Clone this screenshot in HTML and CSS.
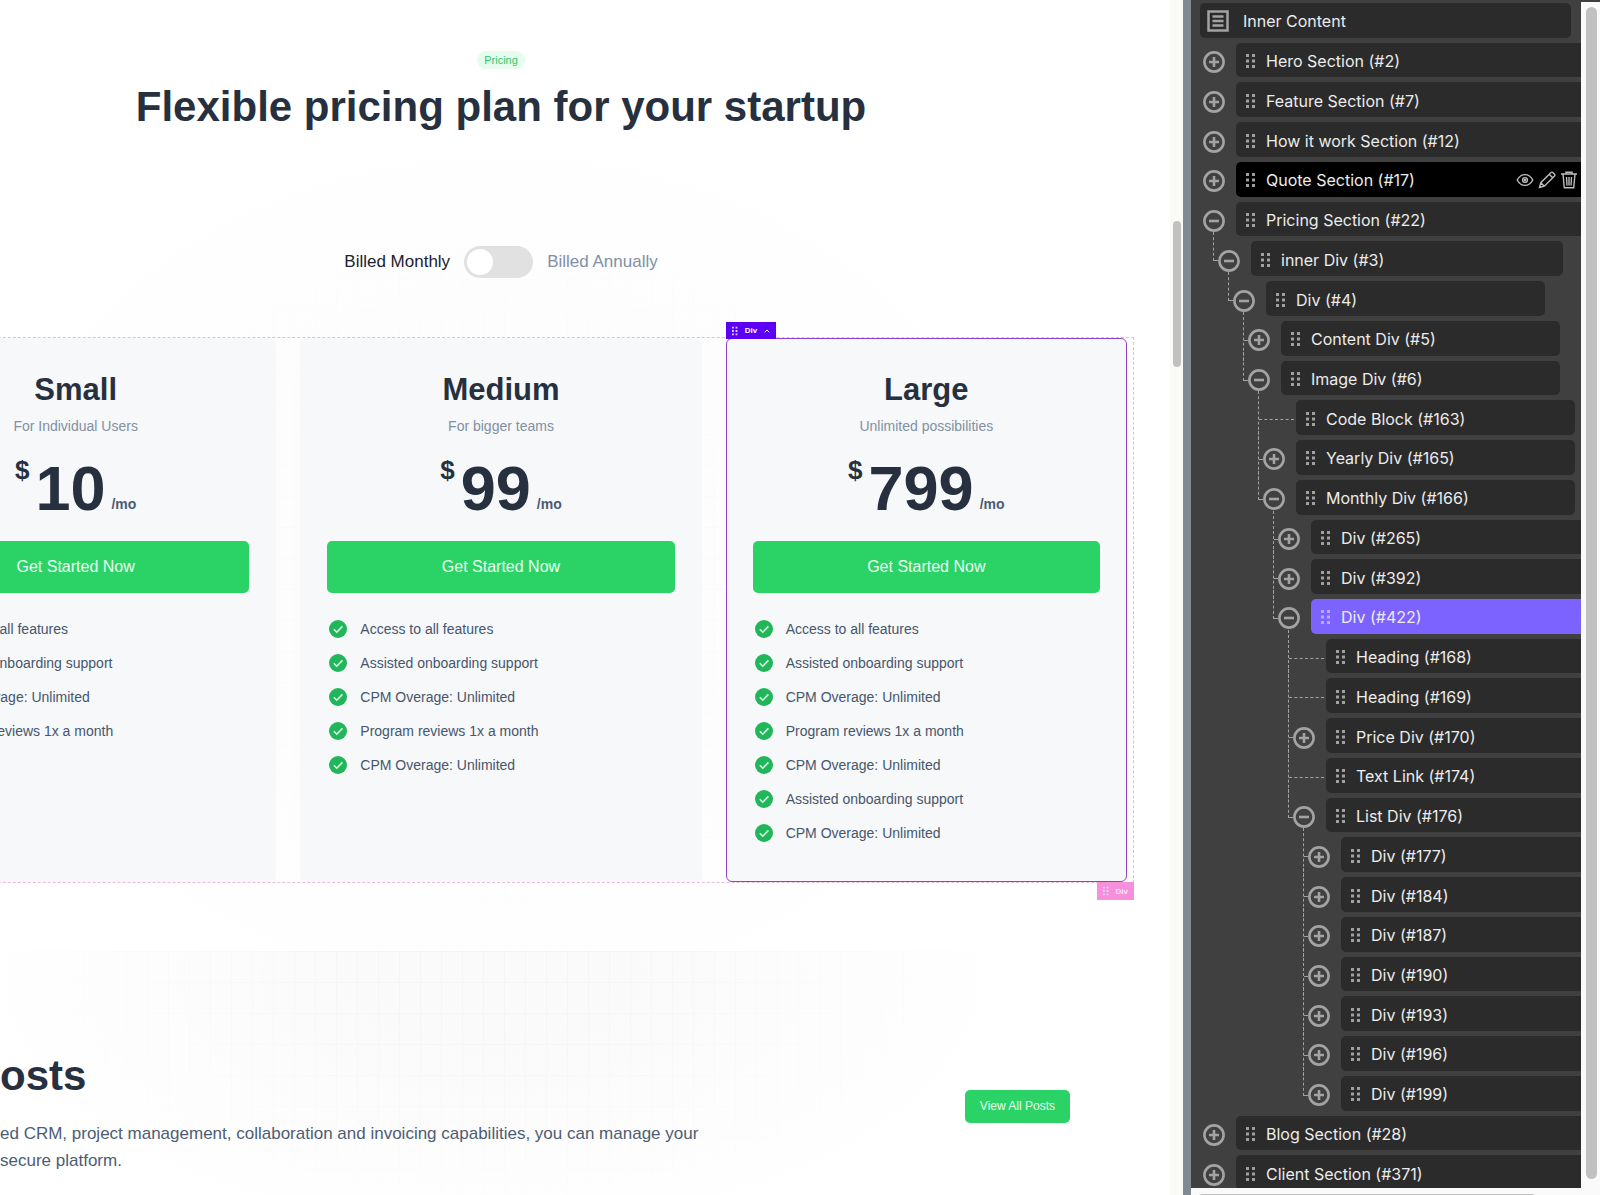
FILE: index.html
```html
<!DOCTYPE html>
<html lang="en">
<head>
  <meta charset="UTF-8">
  <meta name="viewport" content="width=device-width, initial-scale=1.0">
  <title>Page Builder</title>
  <link rel="stylesheet" href="styles.css">
</head>
<body>

  <!-- Shared icons -->
  <svg class="sprite" aria-hidden="true">
    <symbol id="plus" viewBox="0 0 22 22"><circle cx="11" cy="11" r="9.6"/><path d="M11 6v10M6 11h10"/></symbol>
    <symbol id="minus" viewBox="0 0 22 22"><circle cx="11" cy="11" r="9.6"/><path d="M6 11h10"/></symbol>
    <symbol id="dots" viewBox="0 0 10 16"><path d="M0 1h3v3H0zM6 1h3v3H6zM0 6.5h3v3H0zM6 6.5h3v3H6zM0 12h3v3H0zM6 12h3v3H6z"/></symbol>
    <symbol id="check" viewBox="0 0 18 18"><circle cx="9" cy="9" r="9" fill="#22b65b"/><path d="M4.8 9.2l3 3 5.6-5.8" fill="none" stroke="#d9fbe5" stroke-width="1.6"/></symbol>
  </svg>

  <main class="canvas">
    <section class="pricing">
      <div class="pricing-inner">
        <span class="badge">Pricing</span>
        <h1>Flexible pricing plan for your startup</h1>

        <div class="billing">
          <label for="billing">Billed Monthly</label>
          <input type="checkbox" id="billing" class="switch">
          <label for="billing" class="muted">Billed Annually</label>
        </div>

        <div class="plans">
          <article class="plan">
            <h2>Small</h2>
            <p class="plan-sub">For Individual Users</p>
            <div class="price"><span class="currency">$</span><span class="amount">10</span><span class="period">/mo</span></div>
            <a href="#" class="btn">Get Started Now</a>
            <ul class="features">
              <li><svg><use href="#check"/></svg>Access to all features</li>
              <li><svg><use href="#check"/></svg>Assisted onboarding support</li>
              <li><svg><use href="#check"/></svg>CPM Overage: Unlimited</li>
              <li><svg><use href="#check"/></svg>Program reviews 1x a month</li>
            </ul>
          </article>

          <article class="plan">
            <h2>Medium</h2>
            <p class="plan-sub">For bigger teams</p>
            <div class="price"><span class="currency">$</span><span class="amount">99</span><span class="period">/mo</span></div>
            <a href="#" class="btn">Get Started Now</a>
            <ul class="features">
              <li><svg><use href="#check"/></svg>Access to all features</li>
              <li><svg><use href="#check"/></svg>Assisted onboarding support</li>
              <li><svg><use href="#check"/></svg>CPM Overage: Unlimited</li>
              <li><svg><use href="#check"/></svg>Program reviews 1x a month</li>
              <li><svg><use href="#check"/></svg>CPM Overage: Unlimited</li>
            </ul>
          </article>

          <article class="plan selected">
            <button class="tag"><svg class="tag-dots"><use href="#dots"/></svg>Div<svg class="tag-caret" viewBox="0 0 6 4"><path d="M.7 3.3L3 1l2.300 2.300"/></svg></button>
            <h2>Large</h2>
            <p class="plan-sub">Unlimited possibilities</p>
            <div class="price"><span class="currency">$</span><span class="amount">799</span><span class="period">/mo</span></div>
            <a href="#" class="btn">Get Started Now</a>
            <ul class="features">
              <li><svg><use href="#check"/></svg>Access to all features</li>
              <li><svg><use href="#check"/></svg>Assisted onboarding support</li>
              <li><svg><use href="#check"/></svg>CPM Overage: Unlimited</li>
              <li><svg><use href="#check"/></svg>Program reviews 1x a month</li>
              <li><svg><use href="#check"/></svg>CPM Overage: Unlimited</li>
              <li><svg><use href="#check"/></svg>Assisted onboarding support</li>
              <li><svg><use href="#check"/></svg>CPM Overage: Unlimited</li>
            </ul>
          </article>

          <button class="tag tag-parent"><svg class="tag-dots"><use href="#dots"/></svg>Div</button>
        </div>
      </div>
    </section>

    <section class="blog">
      <div>
        <h1>osts</h1>
        <p>ed CRM, project management, collaboration and invoicing capabilities, you can manage your<br>secure platform.</p>
      </div>
      <a href="#" class="btn btn-small">View All Posts</a>
    </section>
  </main>

  <div class="canvas-scroll"><div class="thumb"></div></div>
  <div class="divider"></div>

  <aside class="structure">
    <div class="tree-panel">
      <ul class="tree">
        <li class="root"><div class="node"><svg class="root-icon" viewBox="0 0 22 22"><path d="M1.500 1.500h19v19h-19z"/><path d="M5.500 6.500h11M5.500 11h11M5.500 15.500h11"/></svg>Inner Content</div></li>
        <li class="l0"><button class="toggle" aria-label="Expand"><svg><use href="#plus"/></svg></button><div class="node"><svg class="dots"><use href="#dots"/></svg>Hero Section (#2)</div></li>
        <li class="l0"><button class="toggle" aria-label="Expand"><svg><use href="#plus"/></svg></button><div class="node"><svg class="dots"><use href="#dots"/></svg>Feature Section (#7)</div></li>
        <li class="l0"><button class="toggle" aria-label="Expand"><svg><use href="#plus"/></svg></button><div class="node"><svg class="dots"><use href="#dots"/></svg>How it work Section (#12)</div></li>
        <li class="l0"><button class="toggle" aria-label="Expand"><svg><use href="#plus"/></svg></button>
          <div class="node hovered"><svg class="dots"><use href="#dots"/></svg>Quote Section (#17)
            <span class="actions">
              <button aria-label="Hide"><svg viewBox="0 0 18 18"><path d="M1.200 9C3 5.600 5.800 3.600 9 3.600s6 2 7.800 5.400c-1.800 3.400-4.600 5.400-7.800 5.400S3 12.400 1.200 9z"/><circle cx="9" cy="9" r="2.400"/><circle cx="9" cy="9" r=".6"/></svg></button>
              <button aria-label="Edit"><svg viewBox="0 0 18 18"><path d="M1.500 16.500l1.300-4.800L13 1.500q1-.8 2 .2l1.300 1.300q1 1 .2 2L6.300 15.200zM11.200 3.300l3.500 3.500M2.800 11.700l3.500 3.500"/></svg></button>
              <button aria-label="Delete"><svg viewBox="0 0 18 18"><path d="M1 3h16M6 3V1.200h6V3M3 3l1.300 13.800h9.400L15 3M6.500 6l.5 8.500M9 6v8.500M11.500 6l-.5 8.500"/></svg></button>
            </span>
          </div></li>
        <li class="l0"><button class="toggle" aria-label="Collapse"><svg><use href="#minus"/></svg></button><div class="node"><svg class="dots"><use href="#dots"/></svg>Pricing Section (#22)</div></li>
        <li class="l1 last"><button class="toggle" aria-label="Collapse"><svg><use href="#minus"/></svg></button><div class="node"><svg class="dots"><use href="#dots"/></svg>inner Div (#3)</div></li>
        <li class="l2 last"><button class="toggle" aria-label="Collapse"><svg><use href="#minus"/></svg></button><div class="node"><svg class="dots"><use href="#dots"/></svg>Div (#4)</div></li>
        <li class="l3"><button class="toggle" aria-label="Expand"><svg><use href="#plus"/></svg></button><div class="node"><svg class="dots"><use href="#dots"/></svg>Content Div (#5)</div></li>
        <li class="l3 last"><button class="toggle" aria-label="Collapse"><svg><use href="#minus"/></svg></button><div class="node"><svg class="dots"><use href="#dots"/></svg>Image Div (#6)</div></li>
        <li class="l4 leaf"><div class="node"><svg class="dots"><use href="#dots"/></svg>Code Block (#163)</div></li>
        <li class="l4"><button class="toggle" aria-label="Expand"><svg><use href="#plus"/></svg></button><div class="node"><svg class="dots"><use href="#dots"/></svg>Yearly Div (#165)</div></li>
        <li class="l4 last"><button class="toggle" aria-label="Collapse"><svg><use href="#minus"/></svg></button><div class="node"><svg class="dots"><use href="#dots"/></svg>Monthly Div (#166)</div></li>
        <li class="l5"><button class="toggle" aria-label="Expand"><svg><use href="#plus"/></svg></button><div class="node"><svg class="dots"><use href="#dots"/></svg>Div (#265)</div></li>
        <li class="l5"><button class="toggle" aria-label="Expand"><svg><use href="#plus"/></svg></button><div class="node"><svg class="dots"><use href="#dots"/></svg>Div (#392)</div></li>
        <li class="l5 last"><button class="toggle" aria-label="Collapse"><svg><use href="#minus"/></svg></button><div class="node active"><svg class="dots"><use href="#dots"/></svg>Div (#422)</div></li>
        <li class="l6 leaf"><div class="node"><svg class="dots"><use href="#dots"/></svg>Heading (#168)</div></li>
        <li class="l6 leaf"><div class="node"><svg class="dots"><use href="#dots"/></svg>Heading (#169)</div></li>
        <li class="l6"><button class="toggle" aria-label="Expand"><svg><use href="#plus"/></svg></button><div class="node"><svg class="dots"><use href="#dots"/></svg>Price Div (#170)</div></li>
        <li class="l6 leaf"><div class="node"><svg class="dots"><use href="#dots"/></svg>Text Link (#174)</div></li>
        <li class="l6 last"><button class="toggle" aria-label="Collapse"><svg><use href="#minus"/></svg></button><div class="node"><svg class="dots"><use href="#dots"/></svg>List Div (#176)</div></li>
        <li class="l7"><button class="toggle" aria-label="Expand"><svg><use href="#plus"/></svg></button><div class="node"><svg class="dots"><use href="#dots"/></svg>Div (#177)</div></li>
        <li class="l7"><button class="toggle" aria-label="Expand"><svg><use href="#plus"/></svg></button><div class="node"><svg class="dots"><use href="#dots"/></svg>Div (#184)</div></li>
        <li class="l7"><button class="toggle" aria-label="Expand"><svg><use href="#plus"/></svg></button><div class="node"><svg class="dots"><use href="#dots"/></svg>Div (#187)</div></li>
        <li class="l7"><button class="toggle" aria-label="Expand"><svg><use href="#plus"/></svg></button><div class="node"><svg class="dots"><use href="#dots"/></svg>Div (#190)</div></li>
        <li class="l7"><button class="toggle" aria-label="Expand"><svg><use href="#plus"/></svg></button><div class="node"><svg class="dots"><use href="#dots"/></svg>Div (#193)</div></li>
        <li class="l7"><button class="toggle" aria-label="Expand"><svg><use href="#plus"/></svg></button><div class="node"><svg class="dots"><use href="#dots"/></svg>Div (#196)</div></li>
        <li class="l7 last"><button class="toggle" aria-label="Expand"><svg><use href="#plus"/></svg></button><div class="node"><svg class="dots"><use href="#dots"/></svg>Div (#199)</div></li>
        <li class="l0"><button class="toggle" aria-label="Expand"><svg><use href="#plus"/></svg></button><div class="node"><svg class="dots"><use href="#dots"/></svg>Blog Section (#28)</div></li>
        <li class="l0"><button class="toggle" aria-label="Expand"><svg><use href="#plus"/></svg></button><div class="node"><svg class="dots"><use href="#dots"/></svg>Client Section (#371)</div></li>
      </ul>
    </div>
    <div class="scroll-y"><div class="thumb"></div></div>
    <div class="scroll-x"><div class="thumb"></div></div>
  </aside>

</body>
</html>
```

FILE: styles.css
```css
* {
  margin: 0;
  padding: 0;
  box-sizing: border-box;
}
body {
  display: flex;
  height: 100vh;
  overflow: hidden;
  background: #fff;
  font-family: "Liberation Sans", Arial, sans-serif;
  color: #27303f;
}
ul {
  list-style: none;
}
button {
  border: 0;
  background: none;
  font: inherit;
  color: inherit;
}
a {
  text-decoration: none;
}
.sprite {
  position: absolute;
  width: 0;
  height: 0;
}

/* Page preview */
.canvas {
  flex: 1;
  min-width: 0;
  display: flex;
  flex-direction: column;
  overflow: hidden;
}
h1 {
  font-size: 42px;
  line-height: 52px;
  white-space: nowrap;
}
.pricing {
  flex-shrink: 0;
  padding-bottom: 68px;
  background:
    radial-gradient(ellipse 50% 50% at 43% 60%, rgba(255, 255, 255, 0) 20%, #fff 100%),
    repeating-linear-gradient(90deg, #f9f9f9 0 1px, transparent 1px 21px),
    repeating-linear-gradient(#f9f9f9 0 1px, transparent 1px 31px),
    #fcfcfc;
}
.pricing-inner {
  display: flex;
  flex-direction: column;
  align-items: center;
  margin: 0 36px 0 -132px;
  padding-top: 51px;
}
.badge {
  padding: 0 7px;
  border-radius: 9px;
  background: #e6fcee;
  color: #2fc868;
  font-size: 11px;
  line-height: 18px;
}
.pricing h1 {
  margin-top: 12px;
}
.billing {
  display: flex;
  align-items: center;
  gap: 14px;
  margin-top: 113px;
  font-size: 17px;
  line-height: 32px;
  color: #1c2230;
}
.billing .muted {
  color: #8290a4;
}
.switch {
  appearance: none;
  width: 69px;
  height: 32px;
  padding: 3px;
  border-radius: 16px;
  background: #e1e1e1;
}
.switch::before {
  content: "";
  display: block;
  width: 26px;
  height: 26px;
  border-radius: 50%;
  background: #fff;
}

/* Plans */
.plans {
  position: relative;
  display: flex;
  gap: 24px;
  width: 100%;
  margin-top: 59px;
  padding: 0 6px;
  border: 1px dashed #eab8e0;
}
.plan {
  position: relative;
  flex: 1;
  padding: 33px 26px 31px;
  border: 1px solid transparent;
  border-radius: 6px;
  background: #f6f8fa;
  text-align: center;
}
.plan.selected {
  border-color: #9442c4;
}
.plan h2 {
  font-size: 31px;
  line-height: 36px;
}
.plan-sub {
  margin-top: 8px;
  font-size: 14px;
  line-height: 20px;
  color: #8290a4;
}
.price {
  display: flex;
  justify-content: center;
  align-items: flex-start;
  gap: 6px;
  margin-top: 21px;
  font-weight: bold;
}
.currency {
  font-size: 26px;
  line-height: 26px;
}
.amount {
  font-size: 63px;
  line-height: 63px;
}
.period {
  align-self: flex-end;
  font-size: 14px;
  line-height: 32px;
  color: #4a5b73;
}
.btn {
  display: block;
  margin-top: 21px;
  border-radius: 5px;
  background: #2bd366;
  color: #e9fff1;
  font-size: 16px;
  line-height: 52px;
}
.features {
  margin-top: 19px;
}
.features li {
  display: flex;
  align-items: center;
  gap: 13px;
  padding-left: 2px;
  font-size: 14px;
  line-height: 34px;
  color: #46566c;
}
.features svg {
  width: 18px;
  height: 18px;
}

/* Element labels on the outlines */
.tag {
  position: absolute;
  left: -1px;
  bottom: 100%;
  display: flex;
  align-items: center;
  gap: 7px;
  padding: 0 6px;
  background: #5c00f5;
  color: #fff;
  font-size: 8px;
  font-weight: bold;
  line-height: 17px;
}
.tag-dots {
  width: 6px;
  height: 10px;
  fill: #e6d4ff;
}
.tag-caret {
  width: 6px;
  height: 4px;
  fill: none;
  stroke: #fff;
}
.tag-parent {
  left: auto;
  right: -1px;
  top: 100%;
  bottom: auto;
  height: 18px;
  background: #f78fdc;
  color: #ffe3f8;
}

/* Blog */
.blog {
  flex: 1 0 auto;
  display: flex;
  justify-content: space-between;
  align-items: flex-start;
  padding: 99px 100px 20px 0;
  background:
    radial-gradient(ellipse 45% 110% at 42% 10%, rgba(255, 255, 255, 0) 20%, #fff 100%),
    repeating-linear-gradient(90deg, #f5f5f5 0 1px, transparent 1px 21px),
    repeating-linear-gradient(#f5f5f5 0 1px, transparent 1px 31px),
    #fafafa;
}
.blog p {
  margin-top: 18px;
  font-size: 17px;
  line-height: 27px;
  color: #4d5d73;
  white-space: nowrap;
}
.btn-small {
  margin-top: 40px;
  padding: 0 15px;
  font-size: 12px;
  line-height: 33px;
}

/* Scrollbars and divider */
.thumb {
  border-radius: 6px;
  background: #c1c1c1;
}
.canvas-scroll {
  width: 13px;
  padding: 221px 2px 0 3px;
  background: #fafaf7;
}
.canvas-scroll .thumb {
  height: 146px;
}
.divider {
  width: 8px;
  background: #808b91;
}

/* Structure panel */
.structure {
  display: grid;
  grid-template: 1fr 7px / 1fr 19px;
  width: 409px;
  height: 100vh;
  background: #fafafa;
}
.tree-panel {
  overflow: hidden;
  background: #404040;
}
.tree {
  display: flex;
  flex-direction: column;
  height: 100vh;
  padding-top: 3px;
  font-family: Inter, "Noto Sans", sans-serif;
  font-size: 16px;
  color: #ececec;
}
.tree li {
  position: relative;
  flex: 1;
  display: flex;
  gap: 11px;
  padding: 0 0 5px 12px;
}
.tree .root {
  padding: 0 10px 5px 9px;
}
.tree .l1 { margin-left: 15px; }
.tree .l2 { margin-left: 30px; }
.tree .l3 { margin-left: 45px; }
.tree .l4 { margin-left: 60px; }
.tree .l5 { margin-left: 75px; }
.tree .l6 { margin-left: 90px; }
.tree .l7 { margin-left: 105px; }
.node {
  flex: 1;
  display: flex;
  align-items: center;
  gap: 10px;
  padding: 2px 0 0 10px;
  border-radius: 5px 0 0 5px;
  background: #2b2b2b;
  white-space: nowrap;
}
.root .node {
  padding-left: 7px;
  gap: 14px;
  border-radius: 5px;
}
.l1 .node,
.l2 .node,
.l3 .node,
.l4 .node {
  flex: 0 0 279px;
  border-radius: 5px;
}
.l1 .node {
  flex-basis: 312px;
}
.leaf .node {
  margin-left: 33px;
}
.node.hovered {
  background: #000;
}
.node.active {
  background: #7c63ff;
}
.dots {
  width: 10px;
  height: 16px;
  fill: #a0a0a0;
}
.active .dots {
  fill: #b9abff;
}
.root-icon {
  width: 22px;
  height: 22px;
  fill: none;
  stroke: #a3a3a3;
  stroke-width: 2.5;
}
.toggle {
  width: 22px;
  padding-top: 4px;
}
.toggle svg {
  display: block;
  width: 22px;
  height: 22px;
  fill: none;
  stroke: #a3a3a3;
  stroke-width: 2.6;
}
.actions {
  display: flex;
  gap: 4px;
  margin-left: auto;
  padding-right: 3px;
}
.actions svg {
  display: block;
  width: 18px;
  height: 18px;
  fill: none;
  stroke: #bdbdbd;
  stroke-width: 1.4;
}

/* Dashed branches: down from the parent, then across to the node */
.tree li:not(.l0):not(.root)::before {
  content: "";
  position: absolute;
  left: 7px;
  top: -9px;
  bottom: 0;
  border-left: 1px dashed #a3a3a3;
}
.tree li.last:not(.l0):not(.root)::before {
  bottom: auto;
  height: 29px;
}
.tree li:not(.l0):not(.root)::after {
  content: "";
  position: absolute;
  left: 8px;
  top: 19px;
  width: 4px;
  border-top: 1px solid #a3a3a3;
}
.tree li.leaf:not(.l0):not(.root)::after {
  width: 35px;
  border-top-style: dashed;
}

.scroll-y {
  padding: 5px 3px 9px 5px;
  border-top: 2px solid #404040;
  background: #fafafa;
}
.scroll-y .thumb {
  height: 100%;
}
.scroll-x {
  grid-column: 1 / -1;
  padding: 6px 63px 0 6px;
  overflow: hidden;
}
.scroll-x .thumb {
  height: 11px;
}
```
